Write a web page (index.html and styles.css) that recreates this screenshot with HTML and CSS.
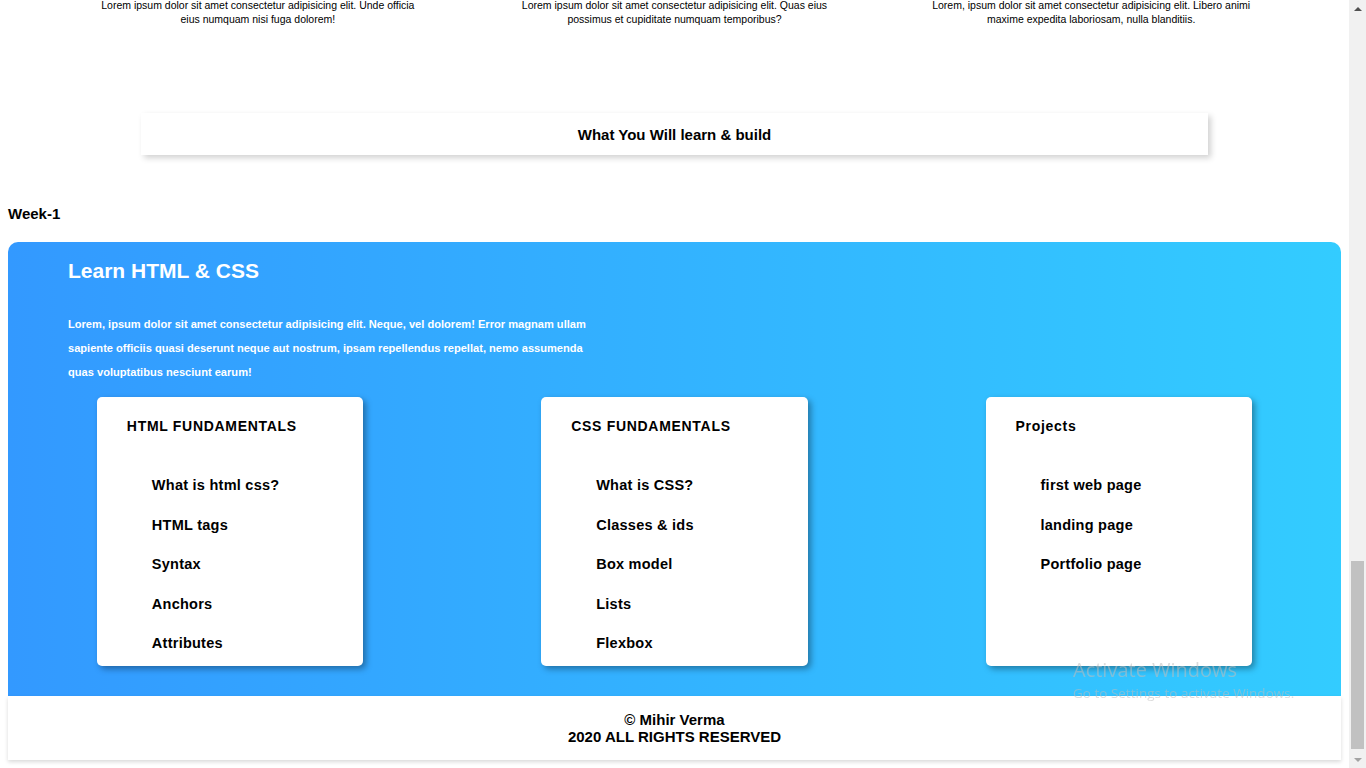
FILE: index.html
```html
<!DOCTYPE html>
<html lang="en">
<head>
<meta charset="utf-8">
<title>Learn HTML &amp; CSS</title>
<link rel="stylesheet" href="styles.css">
</head>
<body>
<div class="window">
  <div class="viewport">
    <main class="page">
      <section class="features">
        <div class="feature"><p>Lorem ipsum dolor sit amet consectetur adipisicing elit. Unde officia eius numquam nisi fuga dolorem!</p></div>
        <div class="feature"><p>Lorem ipsum dolor sit amet consectetur adipisicing elit. Quas eius possimus et cupiditate numquam temporibus?</p></div>
        <div class="feature"><p>Lorem, ipsum dolor sit amet consectetur adipisicing elit. Libero animi maxime expedita laboriosam, nulla blanditiis.</p></div>
      </section>

      <div class="banner"><h2>What You Will learn &amp; build</h2></div>

      <h3 class="week">Week-1</h3>

      <section class="course">
        <h1>Learn HTML &amp; CSS</h1>
        <p class="intro">Lorem, ipsum dolor sit amet consectetur adipisicing elit. Neque, vel dolorem! Error magnam ullam sapiente officiis quasi deserunt neque aut nostrum, ipsam repellendus repellat, nemo assumenda quas voluptatibus nesciunt earum!</p>
        <div class="cards">
          <div class="card">
            <h4>HTML FUNDAMENTALS</h4>
            <ul>
              <li>What is html css?</li>
              <li>HTML tags</li>
              <li>Syntax</li>
              <li>Anchors</li>
              <li>Attributes</li>
            </ul>
          </div>
          <div class="card">
            <h4>CSS FUNDAMENTALS</h4>
            <ul>
              <li>What is CSS?</li>
              <li>Classes &amp; ids</li>
              <li>Box model</li>
              <li>Lists</li>
              <li>Flexbox</li>
            </ul>
          </div>
          <div class="card">
            <h4>Projects</h4>
            <ul>
              <li>first web page</li>
              <li>landing page</li>
              <li>Portfolio page</li>
            </ul>
          </div>
        </div>
      </section>

      <footer class="footer">
        <p>&copy; Mihir Verma</p>
        <p>2020 ALL RIGHTS RESERVED</p>
      </footer>
    </main>
  </div>
  <div class="scrollbar">
    <span class="arrow up"></span>
    <div class="track"><div class="thumb"></div></div>
    <span class="arrow down"></span>
  </div>
</div>
<div class="watermark">
  <div class="wm-title">Activate Windows</div>
  <div class="wm-sub">Go to Settings to activate Windows.</div>
</div>
</body>
</html>
```

FILE: styles.css
```css
html, body {
  margin: 0;
  height: 100%;
}

body {
  font-family: "Liberation Sans", Arial, sans-serif;
  color: #000;
  overflow: hidden;
  background: #fff;
}

.window {
  display: flex;
  height: 100vh;
}

.viewport {
  flex: 1;
  overflow: hidden;
  display: flex;
  flex-direction: column;
  justify-content: flex-end;
  background: #fff;
}

.page {
  padding: 0 8px 8px;
}

/* top feature texts */
.features {
  width: 1250px;
  margin: 0 auto;
  display: grid;
  grid-template-columns: repeat(3, 1fr);
}

.feature p {
  margin: 0 auto;
  max-width: 330px;
  font-size: 10.5px;
  line-height: 14px;
  text-align: center;
}

/* banner */
.banner {
  width: 80%;
  margin: 87px auto 0;
  height: 42px;
  display: flex;
  align-items: center;
  justify-content: center;
  background: #fff;
  box-shadow: 3px 3px 6px rgba(0, 0, 0, 0.18);
}

.banner h2 {
  margin: 0;
  font-size: 15px;
  font-weight: bold;
}

.week {
  margin: 49.5px 0 20.5px;
  font-size: 15px;
  line-height: 17px;
  font-weight: bold;
}

/* course block */
.course {
  background: linear-gradient(90deg, #3399ff, #33ccff);
  border-radius: 10px 10px 0 0;
  padding: 17px 0 30px;
}

.course h1 {
  margin: 0 0 29px 60px;
  color: #fff;
  font-size: 21px;
  line-height: 24px;
  font-weight: bold;
}

.intro {
  margin: 0 0 13px 60px;
  width: 530px;
  color: #fff;
  font-size: 11.1px;
  font-weight: bold;
  line-height: 24px;
}

.cards {
  display: grid;
  grid-template-columns: repeat(3, 1fr);
}

.card {
  width: 60%;
  justify-self: center;
  height: 269px;
  box-sizing: border-box;
  padding: 21px 30px 0;
  background: #fff;
  border-radius: 5px;
  box-shadow: 3px 3px 6px rgba(0, 0, 0, 0.35);
}

.card h4 {
  margin: 0;
  font-size: 14px;
  line-height: 16px;
  letter-spacing: 0.7px;
  font-weight: bold;
}

.card ul {
  list-style: none;
  margin: 43px 0 0;
  padding-left: 25px;
  display: flex;
  flex-direction: column;
  gap: 23.5px;
}

.card li {
  font-size: 14.5px;
  line-height: 16px;
  font-weight: bold;
  letter-spacing: 0.25px;
}

/* footer */
.footer {
  background: #fff;
  padding: 15px 0;
  text-align: center;
  box-shadow: 0 2px 4px rgba(0, 0, 0, 0.15);
  position: relative;
}

.footer p {
  margin: 0;
  font-size: 15px;
  line-height: 17px;
  font-weight: bold;
}

/* fake classic scrollbar */
.scrollbar {
  width: 17px;
  background: #f1f1f1;
  display: flex;
  flex-direction: column;
  align-items: center;
}

.arrow {
  height: 17px;
  width: 17px;
  display: flex;
  align-items: center;
  justify-content: center;
}

.arrow::before {
  content: "";
  width: 0;
  height: 0;
  border-left: 4px solid transparent;
  border-right: 4px solid transparent;
}

.arrow.up::before {
  border-bottom: 4px solid #505050;
}

.arrow.down::before {
  border-top: 4px solid #a3a3a3;
}

.track {
  flex: 1;
  width: 100%;
  display: flex;
  flex-direction: column;
  justify-content: flex-end;
}

.thumb {
  height: 188px;
  margin: 0 2px 2px;
  background: #c1c1c1;
}

/* OS watermark overlay */
.watermark {
  position: fixed;
  left: 1073px;
  top: 657px;
  color: rgba(190, 190, 190, 0.55);
  font-family: "Open Sans", "Noto Sans", sans-serif;
  pointer-events: none;
}

.wm-title {
  font-size: 20px;
  line-height: 26px;
}

.wm-sub {
  font-size: 13.5px;
  line-height: 20px;
}
```
